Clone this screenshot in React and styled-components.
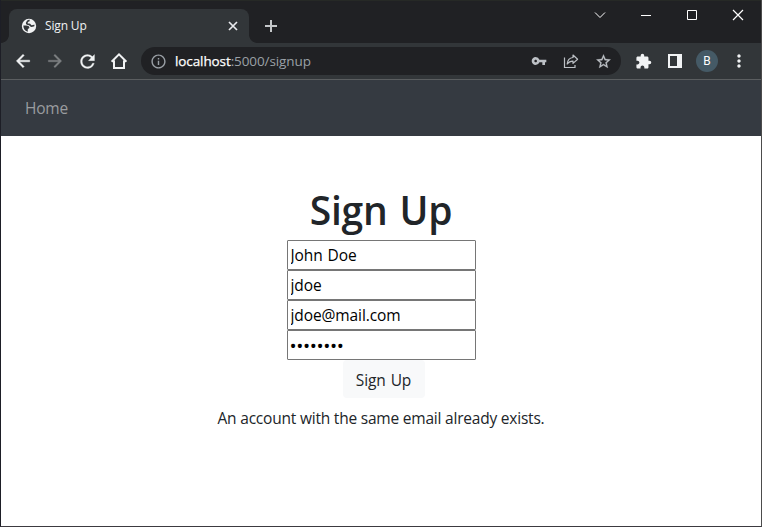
import React from "react";
import styled, { createGlobalStyle } from "styled-components";
import {
  MdArrowBack,
  MdArrowForward,
  MdRefresh,
  MdInfoOutline,
  MdVpnKey,
  MdStarBorder,
  MdExtension,
  MdMoreVert,
} from "react-icons/md";

const GlobalStyle = createGlobalStyle`
  * { box-sizing: border-box; }
  body { margin: 0; background: #fff; font-family: "Open Sans", "Noto Sans", sans-serif; }
  svg { display: block; }
`;

const Window = styled.div`
  width: 762px;
  height: 527px;
  display: flex;
  flex-direction: column;
  overflow: hidden;
  background: #fff;
  border: solid;
  border-width: 0 1px 1px;
  border-color: #1d1e26 #4c4c4c #3c3a40 #1d1e26;
`;

const TitleBar = styled.header`
  height: 43px;
  flex: none;
  display: flex;
  align-items: flex-start;
  background: #202124;
  border-top: 1px solid #262926;
`;

const Tab = styled.div`
  position: relative;
  width: 240px;
  height: 34px;
  margin: 8px 0 0 8px;
  padding: 0 8px 0 12px;
  display: flex;
  align-items: center;
  background: #323639;
  border-radius: 8px 8px 0 0;
  &::before,
  &::after {
    content: "";
    position: absolute;
    bottom: 0;
    width: 8px;
    height: 8px;
  }
  &::before {
    left: -8px;
    background: radial-gradient(circle at 0 0, #202124 7.5px, #323639 8.2px);
  }
  &::after {
    right: -8px;
    background: radial-gradient(circle at 100% 0, #202124 7.5px, #323639 8.2px);
  }
`;

const TabTitle = styled.span`
  flex: 1;
  margin-left: 8px;
  font-size: 12px;
  line-height: 16px;
  letter-spacing: -0.15px;
  color: #f1f3f4;
`;

const TabButton = styled.span`
  width: 16px;
  height: 16px;
  display: grid;
  place-items: center;
`;

const NewTab = styled.span`
  width: 28px;
  height: 28px;
  margin: 11px 0 0 8px;
  display: grid;
  place-items: center;
`;

const WindowControls = styled.div`
  display: flex;
  margin-left: auto;
`;

const WindowControl = styled.span`
  width: 46px;
  height: 28px;
  display: grid;
  place-items: center;
`;

const Toolbar = styled.div`
  height: 37px;
  flex: none;
  display: flex;
  align-items: center;
  padding: 0 6px;
  background: #323639;
  border-bottom: 1px solid #5b5e60;
`;

const ToolButton = styled.span`
  width: 32px;
  height: 32px;
  flex: none;
  display: grid;
  place-items: center;
  color: ${(p) => p.$color || "#f1f3f4"};
  svg {
    stroke-width: ${(p) => p.$weight};
  }
  path[fill="none"] {
    stroke: none;
  }
`;

const AddressBar = styled.div`
  width: 480px;
  height: 28px;
  margin: 0 6px 0 6px;
  padding: 0 2px 0 9px;
  display: flex;
  align-items: center;
  background: #202124;
  border-radius: 14px;
  color: #9aa0a6;
`;

const Url = styled.span`
  flex: 1;
  margin-left: 8px;
  font-size: 13.5px;
  line-height: 20px;
  letter-spacing: -0.1px;
  color: #9aa0a6;
`;

const Host = styled.span`
  color: #fff;
  -webkit-text-stroke: 0.25px #fff;
`;

const Avatar = styled.span`
  width: 22px;
  height: 22px;
  display: grid;
  place-items: center;
  border-radius: 50%;
  background: #455a66;
  color: #fff;
  font: 12px/22px Roboto, sans-serif;
`;

const Navbar = styled.nav`
  height: 56px;
  flex: none;
  display: flex;
  align-items: center;
  padding: 0 24px;
  background: #353a41;
`;

const NavLink = styled.a`
  font-size: 15.5px;
  line-height: 24px;
  letter-spacing: -0.2px;
  color: #9a9c9f;
`;

const Page = styled.main`
  flex: 1;
  display: flex;
  flex-direction: column;
  align-items: center;
  padding-top: 48px;
  color: #212529;
`;

const Heading = styled.h1`
  margin: 0 0 8px;
  padding-top: 2px;
  height: 48px;
  font-size: 39px;
  line-height: 48px;
  font-weight: 600;
  letter-spacing: -0.2px;
  word-spacing: 2px;
`;

const Form = styled.form`
  display: flex;
  flex-direction: column;
  align-items: center;
`;

const Field = styled.input`
  width: 189px;
  height: 30px;
  margin: 0;
  padding: 1px 2px 1px 3px;
  border: 1px solid #767676;
  border-radius: 1px;
  background: #fff;
  color: #000;
  font-family: "Open Sans", sans-serif;
  font-size: 15.5px;
  letter-spacing: -0.1px;
  word-spacing: 1px;
  &[type="password"] {
    padding: 2px 2px 1px 2px;
    font-size: 19px;
    letter-spacing: -0.4px;
  }
`;

const Submit = styled.button`
  width: 82px;
  height: 38px;
  margin-left: 5px;
  padding: 1px 0 0;
  border: 0;
  border-radius: 4px;
  background: #f8f9fa;
  color: #212529;
  font-family: "Open Sans", sans-serif;
  font-size: 15.5px;
  letter-spacing: -0.1px;
  word-spacing: 1px;
`;

const Message = styled.p`
  margin: 8px 0 0;
  font-size: 15.5px;
  line-height: 24px;
  letter-spacing: -0.21px;
  white-space: nowrap;
`;

const Globe = () => (
  <svg width="16" height="16" viewBox="0 0 16 16">
    <circle cx="8" cy="8" r="7.2" fill="#f1f3f4" />
    <path
      d="M8.600 2.300C7 2.500 6 3.700 5.700 4.900c-.2 1.200 1 1.500 2.400 1.500 1.300.1 1.200 1.700 2.700 1.800 1.200 0 1.500-.9 2.600-.6"
      fill="none"
      stroke="#323639"
      strokeWidth="1.700"
    />
    <path
      d="M2.300 7.500h2.900c1.700 0 3.200.7 3.200 2.100 0 1.200-1.500.9-1.700 2-.1.800.3 1.500.2 2.100C4.200 13.100 2.300 10.900 2.300 7.500z"
      fill="#323639"
    />
  </svg>
);

const House = () => (
  <svg width="18" height="18" viewBox="0 0 18 18" fill="none" stroke="currentColor" strokeWidth="2">
    <path d="M1.600 9.700 9 2.400l7.400 7.300M4 8.500V16h10V8.500" />
  </svg>
);

const Share = () => (
  <svg width="16" height="16" viewBox="0 0 16 16" fill="none" stroke="currentColor" strokeWidth="1.200">
    <g>
      <path d="M1.500 4.500v10h10.500V12" />
      <path d="M10 2l4.600 4.200L10 10.400V8.100C7.300 8 5.700 9 4.200 11c.3-3.800 2.300-6.100 5.800-6.500z" strokeLinejoin="round" />
    </g>
  </svg>
);

const SidePanel = () => (
  <svg width="14" height="14" viewBox="0 0 14 14">
    <path fill="currentColor" fillRule="evenodd" d="M0 0h14v14H0zM2 2v10h7V2z" />
  </svg>
);

const Stroke = ({ d, size = 12, width = 1, color = "#fff" }) => (
  <svg width={size} height={size} viewBox="0 0 12 12" fill="none" stroke={color} strokeWidth={width}>
    <path d={d} />
  </svg>
);

export default function App() {
  return (
    <>
      <GlobalStyle />
      <Window>
        <TitleBar>
          <Tab>
            <Globe />
            <TabTitle>Sign Up</TabTitle>
            <TabButton>
              <Stroke d="M2 2l8 8M10 2l-8 8" width={1.7} color="#e8eaed" />
            </TabButton>
          </Tab>
          <NewTab>
            <Stroke d="M6 0v12M0 6h12" width={2} color="#c4c7c9" />
          </NewTab>
          <WindowControls>
            <WindowControl>
              <Stroke d="M1 3.500l5 5 5-5" />
            </WindowControl>
            <WindowControl>
              <Stroke d="M1 6.500h10" />
            </WindowControl>
            <WindowControl>
              <Stroke d="M1.500 1.500h9v9h-9z" />
            </WindowControl>
            <WindowControl>
              <Stroke d="M1 1l10 10M11 1L1 11" width={1.200} />
            </WindowControl>
          </WindowControls>
        </TitleBar>
        <Toolbar>
          <ToolButton $weight={0.5}><MdArrowBack size={20} /></ToolButton>
          <ToolButton $weight={0.4} $color="#7d8082"><MdArrowForward size={20} /></ToolButton>
          <ToolButton $weight={0.3}><MdRefresh size={21} /></ToolButton>
          <ToolButton><House /></ToolButton>
          <AddressBar>
            <MdInfoOutline size={17} />
            <Url><Host>localhost</Host>:5000/signup</Url>
            <ToolButton $weight={0} $color="#bdc1c6"><MdVpnKey size={16} /></ToolButton>
            <ToolButton $color="#bdc1c6"><Share /></ToolButton>
            <ToolButton $weight={0.4} $color="#bdc1c6"><MdStarBorder size={17} /></ToolButton>
          </AddressBar>
          <ToolButton $weight={0}><MdExtension size={17} /></ToolButton>
          <ToolButton><SidePanel /></ToolButton>
          <ToolButton><Avatar>B</Avatar></ToolButton>
          <ToolButton $weight={0}><MdMoreVert size={20} /></ToolButton>
        </Toolbar>
        <Navbar>
          <NavLink>Home</NavLink>
        </Navbar>
        <Page>
          <Heading>Sign Up</Heading>
          <Form>
            <Field type="text" defaultValue="John Doe" />
            <Field type="text" defaultValue="jdoe" />
            <Field type="text" defaultValue="jdoe@mail.com" />
            <Field type="password" defaultValue="password" />
            <Submit type="button">Sign Up</Submit>
          </Form>
          <Message>An account with the same email already exists.</Message>
        </Page>
      </Window>
    </>
  );
}
